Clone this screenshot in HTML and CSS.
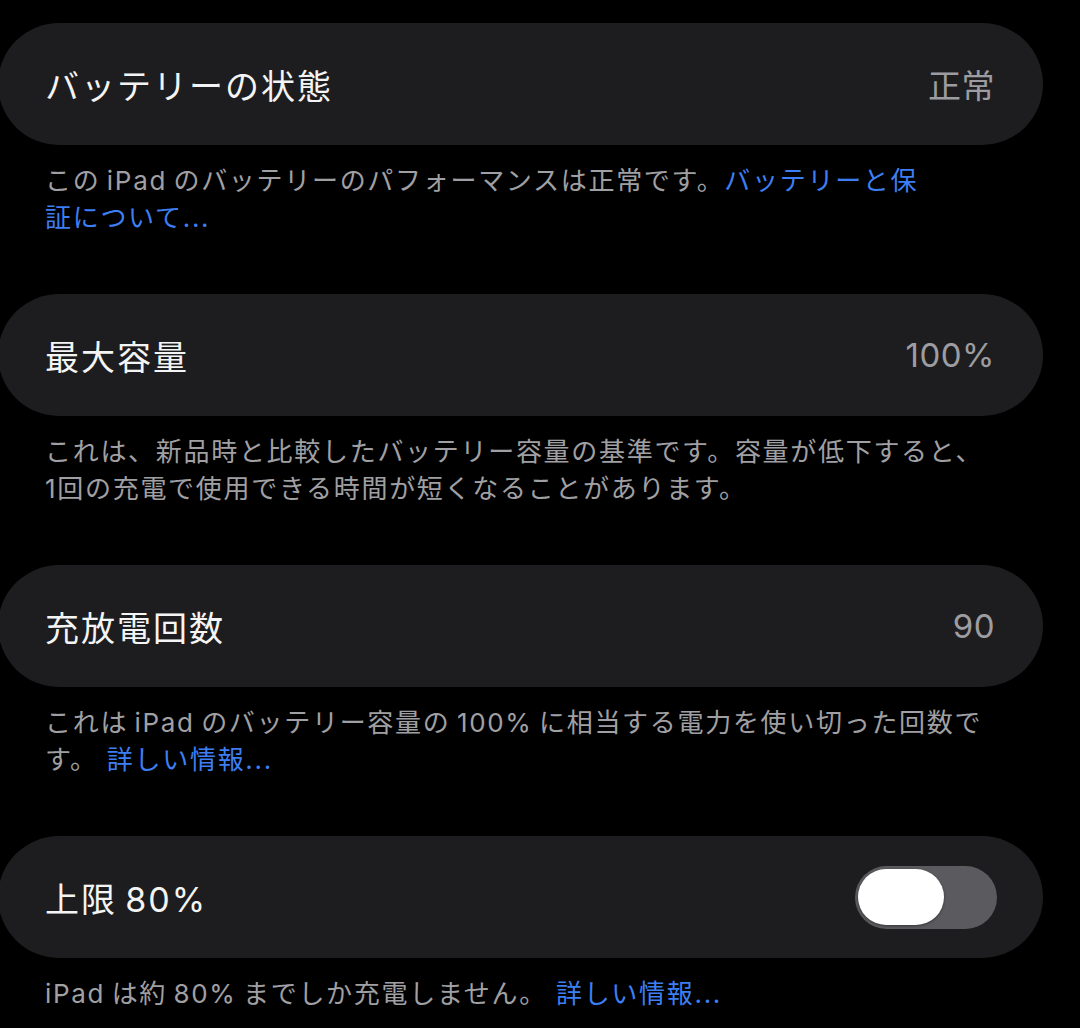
FILE: index.html
```html
<!DOCTYPE html>
<html lang="ja">
<head>
    <meta charset="UTF-8">
    <meta name="viewport" content="width=device-width, initial-scale=1.0">
    <title>バッテリーの状態</title>
    <link rel="stylesheet" href="styles.css">
</head>
<body>
    <div class="list">
        <section class="group">
            <div class="cell">
                <span class="cell-title">バッテリーの状態</span>
                <span class="cell-value">正常</span>
            </div>
            <p class="footer">この&thinsp;iPad&thinsp;のバッテリーのパフォーマンスは正常です。<a href="#">バッテリーと保<br>証について...</a></p>
        </section>

        <section class="group">
            <div class="cell">
                <span class="cell-title">最大容量</span>
                <span class="cell-value">100%</span>
            </div>
            <p class="footer">これは、新品時と比較したバッテリー容量の基準です。容量が低下すると、<br>1回の充電で使用できる時間が短くなることがあります。</p>
        </section>

        <section class="group">
            <div class="cell">
                <span class="cell-title">充放電回数</span>
                <span class="cell-value">90</span>
            </div>
            <p class="footer">これは&thinsp;iPad&thinsp;のバッテリー容量の&thinsp;100%&thinsp;に相当する電力を使い切った回数で<br>す。 <a href="#">詳しい情報...</a></p>
        </section>

        <section class="group">
            <div class="cell">
                <span class="cell-title">上限&thinsp;80%</span>
                <span class="switch"><span class="knob"></span></span>
            </div>
            <p class="footer">iPad&thinsp;は約&thinsp;80%&thinsp;までしか充電しません。 <a href="#">詳しい情報...</a></p>
        </section>
    </div>
</body>
</html>
```

FILE: styles.css
```css
body {
    margin: 0;
    padding: 0;
    background-color: #000;
    font-family: "Inter", "Noto Sans CJK JP", sans-serif;
    color: #f2f2f2;
}

.list {
    padding: 23px 37px 0 0;
    margin-left: -2px;
}

.group {
    margin-bottom: 58px;
}

.cell {
    height: 122px;
    background-color: #1d1d1f;
    border-radius: 61px;
    display: flex;
    align-items: center;
    justify-content: space-between;
    padding: 0 48px 0 47px;
}

.cell-title {
    font-size: 34px;
    letter-spacing: 2px;
    color: #f4f4f4;
}

.cell-value {
    font-size: 33px;
    color: #9d9da1;
    letter-spacing: 0.5px;
}

.switch {
    width: 142px;
    height: 63px;
    border-radius: 32px;
    background-color: #5b5b5f;
    display: flex;
    align-items: center;
    padding: 0 3px;
    box-sizing: border-box;
    margin-right: -2px;
}

.knob {
    width: 86px;
    height: 56px;
    border-radius: 28px;
    background-color: #fff;
    box-shadow: 0 1px 3px rgba(0, 0, 0, 0.4);
}

.footer {
    margin: 0;
    padding: 17px 0 0 47px;
    font-size: 26px;
    line-height: 37px;
    letter-spacing: 1.7px;
    color: #a0a0a4;
}

.footer a {
    color: #3d7ff2;
    text-decoration: none;
}
```
